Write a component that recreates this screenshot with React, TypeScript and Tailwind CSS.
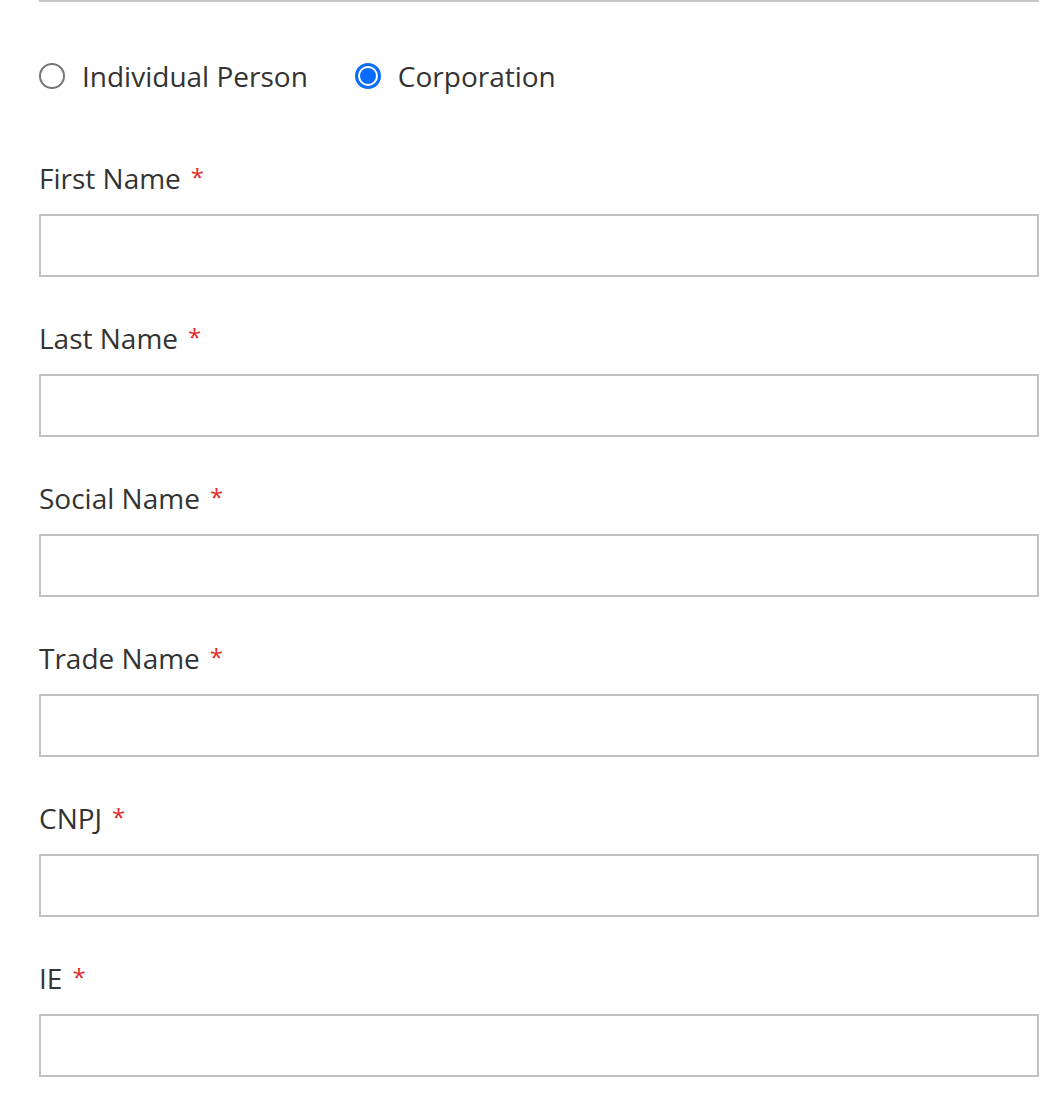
import { useState } from 'react';

const fields = ['First Name', 'Last Name', 'Social Name', 'Trade Name', 'CNPJ', 'IE'];

const Radio = ({ checked }: { checked: boolean }) =>
  checked ? (
    <span className="flex h-[26px] w-[26px] items-center justify-center rounded-full border-[3px] border-[#0a6cff] bg-white">
      <span className="h-[16px] w-[16px] rounded-full bg-[#0a6cff]" />
    </span>
  ) : (
    <span className="h-[26px] w-[26px] rounded-full border-2 border-[#767676] bg-white" />
  );

export default function App() {
  const [type, setType] = useState<'person' | 'corp'>('corp');

  return (
    <div className="min-h-[1102px] bg-white font-['Open_Sans',sans-serif] text-[#333]">
      <div className="ml-[39px] w-[1000px]">
        <div className="border-t-2 border-[#c8c8c8]" />

        <div className="mt-[54px] flex h-[40px] items-center text-[28px] leading-[40px]">
          <label className="flex cursor-pointer items-center" onClick={() => setType('person')}>
            <Radio checked={type === 'person'} />
            <span className="ml-[17px]">Individual Person</span>
          </label>
          <label className="ml-[47px] flex cursor-pointer items-center" onClick={() => setType('corp')}>
            <Radio checked={type === 'corp'} />
            <span className="ml-[17px]">Corporation</span>
          </label>
        </div>

        <div className="mt-[62px]">
          {fields.map((f) => (
            <div key={f} className="mb-[41px]">
              <label className="mb-[16px] flex h-[40px] items-center text-[28px] leading-[40px]">
                {f}
                <span className="mb-[2px] ml-[10px] text-[24px] leading-none text-[#e02b27]">*</span>
              </label>
              <input
                type="text"
                className="block h-[63px] w-full border-2 border-[#c2c2c2] bg-white px-[18px] text-[28px] outline-none"
              />
            </div>
          ))}
        </div>
      </div>
    </div>
  );
}
